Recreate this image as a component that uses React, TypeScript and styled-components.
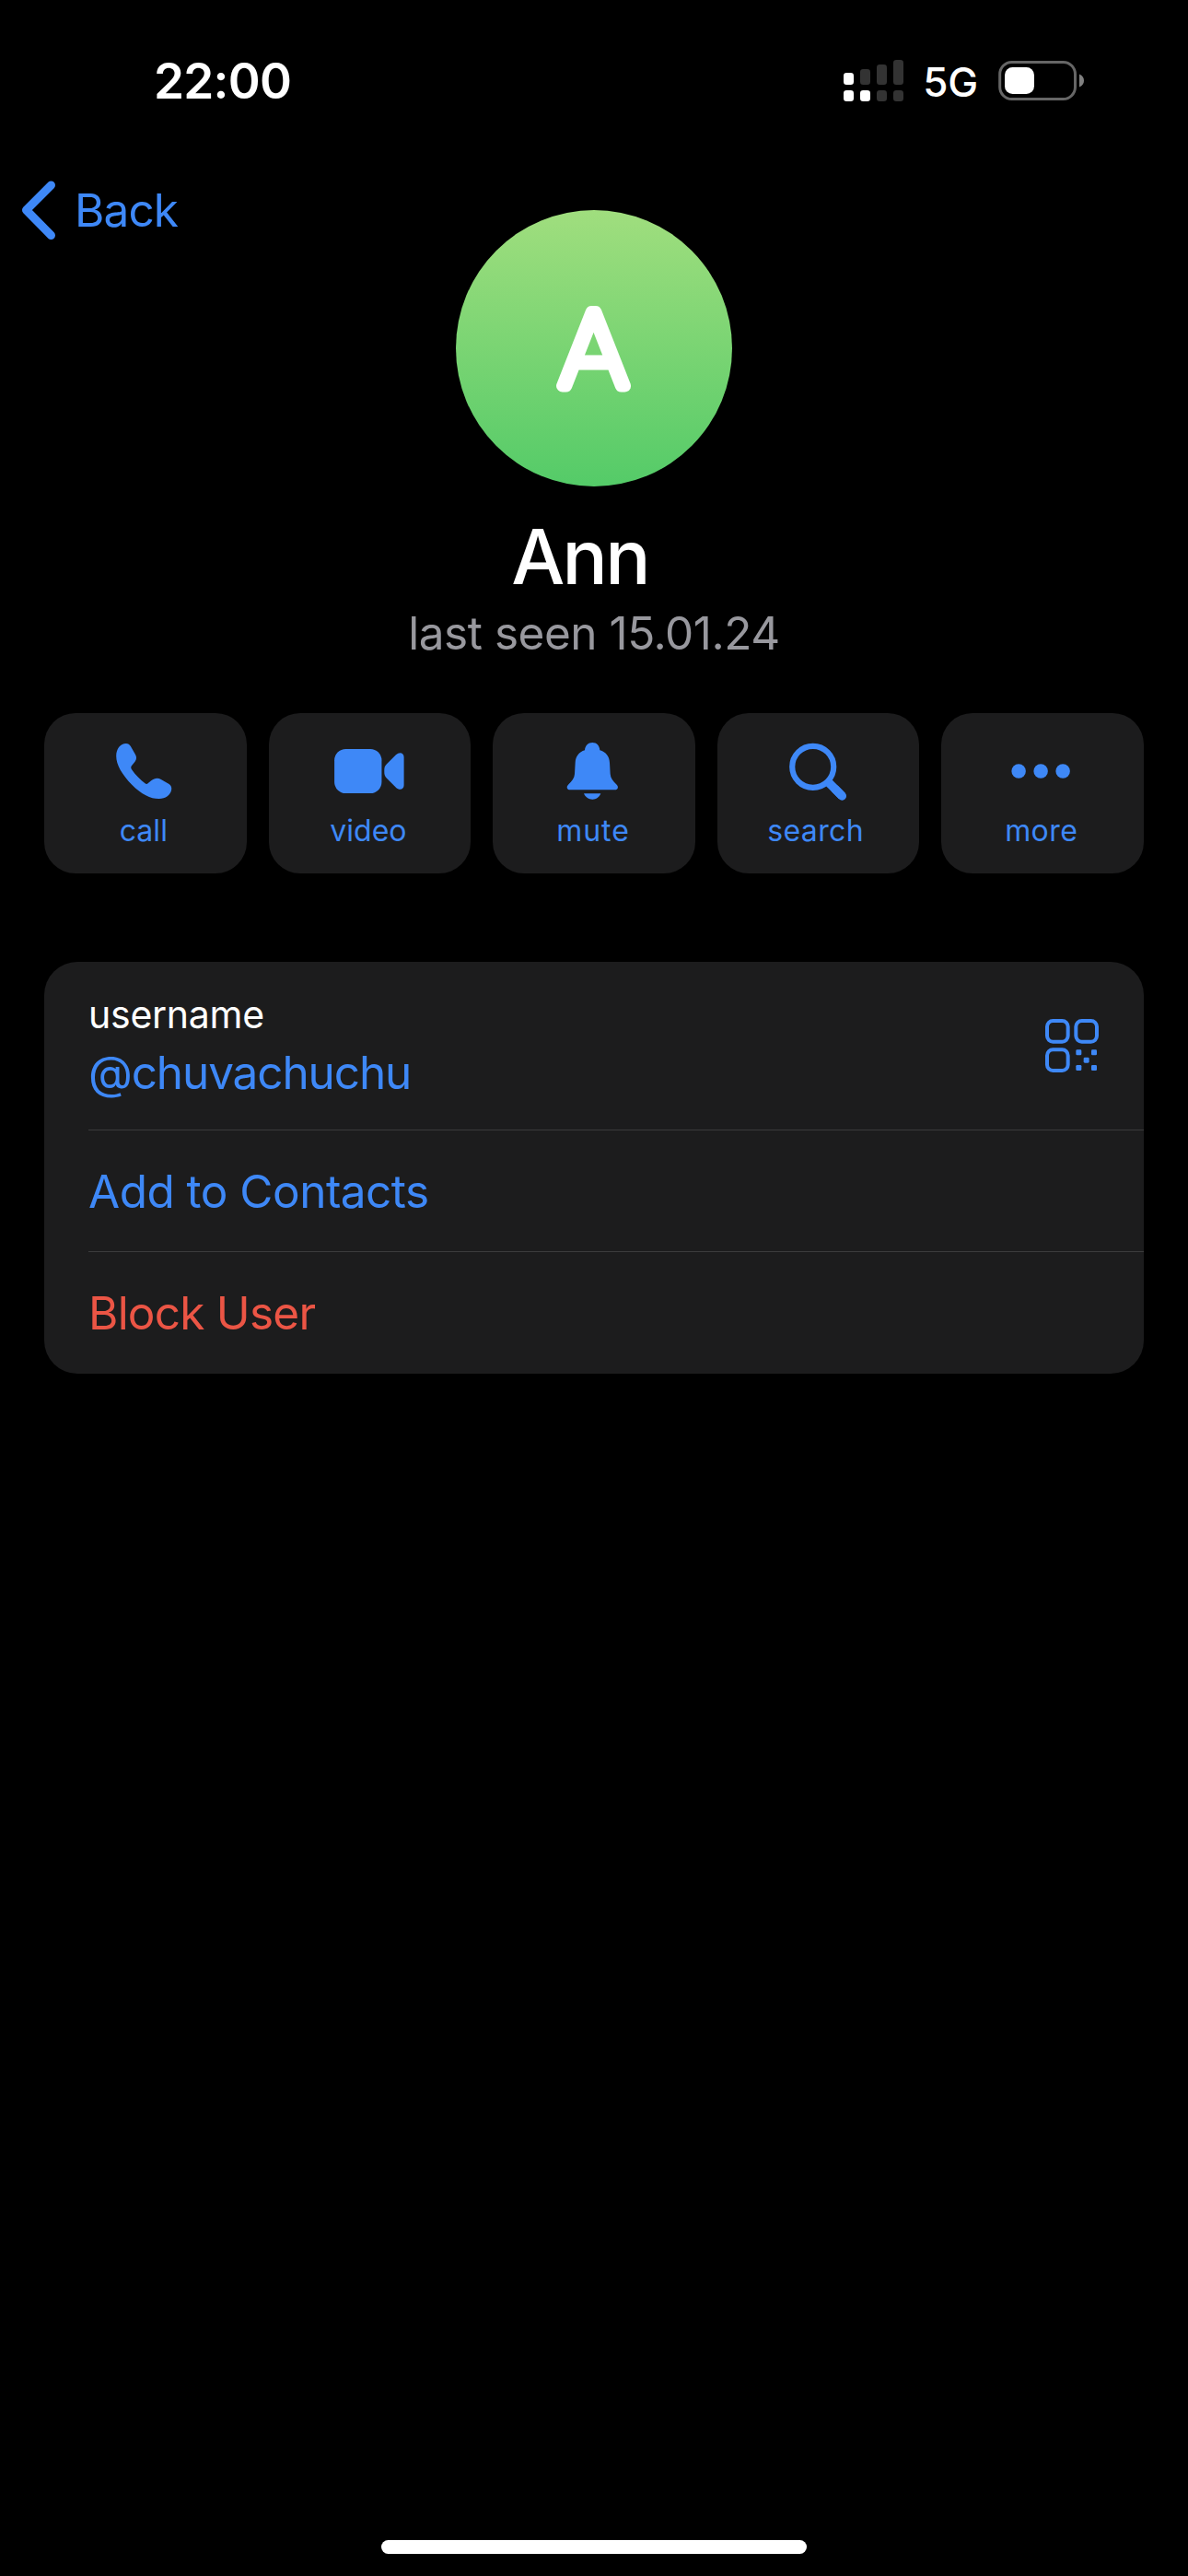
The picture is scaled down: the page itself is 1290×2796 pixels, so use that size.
import React from "react";
import styled, { createGlobalStyle } from "styled-components";

const BLUE = "#3e88f7";
const RED = "#eb5545";
const CARD = "#1c1c1d";

const Global = createGlobalStyle`
  body { margin: 0; background: #000; }
  * { box-sizing: border-box; }
`;

const Screen = styled.main`
  width: 1290px;
  height: 2796px;
  background: #000;
  color: #fff;
  font-family: Inter, "Noto Sans", sans-serif;
  display: flex;
  flex-direction: column;
  overflow: hidden;
`;

const StatusBar = styled.header`
  height: 176px;
  display: flex;
  align-items: center;
  justify-content: space-between;
  padding: 0 113px 0 167px;
`;

const Time = styled.span`
  font-size: 53px;
  font-weight: 600;
  line-height: 64px;
  letter-spacing: -0.73px;
`;

const Indicators = styled.div`
  display: flex;
  align-items: center;
  padding-bottom: 2px;
`;

const Network = styled.span`
  font-size: 44px;
  font-weight: 500;
  line-height: 54px;
  letter-spacing: -0.2px;
  margin: 3px 22px 0 21px;
`;

const Glyph = styled.svg`
  display: block;
  flex: none;
`;

const Top = styled.section`
  display: grid;

  > * {
    grid-area: 1 / 1;
  }
`;

const BackButton = styled.button`
  align-self: start;
  justify-self: start;
  height: 104px;
  display: flex;
  align-items: center;
  gap: 19px;
  padding: 0 0 0 22px;
  border: 0;
  background: none;
  color: ${BLUE};
  font: 400 49.5px/60px Inter, "Noto Sans", sans-serif;
  letter-spacing: -0.9px;
`;

const Profile = styled.div`
  display: flex;
  flex-direction: column;
  align-items: center;
  padding-top: 52px;
`;

const Avatar = styled.div`
  width: 300px;
  height: 300px;
  border-radius: 50%;
  overflow: hidden;
  background: linear-gradient(#a0de7e, #54cb68);
`;

const Name = styled.h1`
  margin: 27px 31px 0 0;
  font-size: 82px;
  font-weight: 500;
  line-height: 100px;
  letter-spacing: -2.73px;
`;

const LastSeen = styled.p`
  margin: 2px 0 0;
  color: #98989e;
  font-size: 49.5px;
  line-height: 60px;
  letter-spacing: -0.47px;
`;

const Actions = styled.nav`
  display: grid;
  grid-template-columns: repeat(5, 1fr);
  gap: 24px;
  margin: 57px 48px 0;
`;

const Action = styled.button`
  height: 174px;
  display: flex;
  flex-direction: column;
  align-items: center;
  gap: 9px;
  padding: 27px 0 0;
  border: 0;
  border-radius: 34px;
  background: ${CARD};
  color: ${BLUE};
`;

const ActionLabel = styled.span<{ $spacing: number; $trim: number }>`
  font: 400 32px/40px Inter, "Noto Sans", sans-serif;
  letter-spacing: ${(p) => p.$spacing}px;
  padding-right: ${(p) => p.$trim}px;
`;

const Card = styled.section`
  margin: 96px 48px 0;
  border-radius: 36px;
  background: ${CARD};
  padding-left: 48px;
`;

const Row = styled.div<{ $height: number; $last?: boolean }>`
  height: ${(p) => p.$height}px;
  display: flex;
  align-items: center;
  justify-content: space-between;
  padding-right: 48px;
  border-bottom: ${(p) => (p.$last ? "0" : "1px solid #3b3b3c")};
`;

const Field = styled.div`
  display: flex;
  flex-direction: column;
  gap: 8px;
`;

const FieldLabel = styled.span`
  font-size: 41px;
  line-height: 50px;
  letter-spacing: -0.25px;
`;

const RowText = styled.span<{ $color?: string; $spacing: number }>`
  color: ${(p) => p.$color ?? BLUE};
  font-size: 49.5px;
  line-height: 60px;
  letter-spacing: ${(p) => p.$spacing}px;
`;

const HomeIndicator = styled.div`
  width: 462px;
  height: 15px;
  border-radius: 8px;
  background: #fff;
  margin: auto auto 24px;
`;

const actions = [
  {
    label: "call",
    spacing: 0.06,
    trim: 4,
    viewBox: "233.4 123 240 216",
    icon: (
      <path d="M258 182C258 158 272 141 290 141C297 141 301 144 305 150L320 176C325 184 325 192 319 200L308 214C305 218 306 221 308 225C320 243 338 260 352 271C356 274 359 273 362 270L372 262C383 253 394 252 404 258L430 273C437 278 439 284 438 291C435 309 419 321 397 321C370 321 340 306 309 275C277 242 258 210 258 182Z" />
    ),
  },
  {
    label: "video",
    spacing: 0,
    trim: 3,
    viewBox: "964.2 123 240 216",
    icon: (
      <>
        <rect x="970.5" y="159" width="154" height="144" rx="37" />
        <path d="M1133 231C1133 220 1134 215 1141 208L1171 178C1182 167 1197 171 1197 185V277C1197 291 1182 295 1171 284L1141 254C1134 247 1133 242 1133 231Z" />
      </>
    ),
  },
  {
    label: "mute",
    spacing: 0.96,
    trim: 2,
    viewBox: "255 123 240 216",
    icon: (
      <>
        <path d="M370 138C384 138 393 148 394 163C414 169 425 183 426 203L428 240C429 254 436 263 449 275C456 282 453 292 443 292H297C287 292 284 282 291 275C304 263 311 254 312 240L314 203C315 183 326 169 345 163C346 148 356 138 370 138Z" />
        <path d="M342 304H397C392 316 382 323 370 323C358 323 347 316 342 304Z" />
      </>
    ),
  },
  {
    label: "search",
    spacing: 0.35,
    trim: 6,
    viewBox: "985.8 123 240 216",
    icon: (
      <g fill="none" stroke="currentColor">
        <circle cx="1087" cy="217" r="67.5" strokeWidth="18.5" />
        <path d="M1139 269L1182 312" strokeWidth="28" />
        <path d="M1160 290L1182 312" strokeWidth="28" strokeLinecap="round" />
      </g>
    ),
  },
  {
    label: "more",
    spacing: 0.42,
    trim: 3,
    viewBox: "336.6 123 240 216",
    icon: (
      <>
        <circle cx="379" cy="231" r="23.3" />
        <circle cx="451" cy="231" r="23.3" />
        <circle cx="523" cy="231" r="23.3" />
      </>
    ),
  },
];

function Signal() {
  const bars = [
    { x: 0, y: 14, h: 13, top: "#fff", bottom: "#fff" },
    { x: 18, y: 10, h: 17, top: "#333", bottom: "#fff" },
    { x: 36, y: 5, h: 22, top: "#333", bottom: "#333" },
    { x: 54, y: 0, h: 27, top: "#333", bottom: "#333" },
  ];
  return (
    <Glyph width="65" height="45" viewBox="0 0 65 45">
      {bars.map((b) => (
        <g key={b.x}>
          <rect x={b.x} y={b.y} width="11" height={b.h} rx="3.3" fill={b.top} />
          <rect x={b.x} y="33" width="11" height="12" rx="3.3" fill={b.bottom} />
        </g>
      ))}
    </Glyph>
  );
}

function Battery() {
  return (
    <Glyph width="93" height="43" viewBox="0 0 93 43">
      <rect x="1.7" y="1.5" width="81.8" height="40" rx="13" fill="none" stroke="#666" strokeWidth="3" />
      <rect x="7" y="7" width="32" height="29" rx="8.5" fill="#fff" />
      <path d="M88 14.5C91.5 16 93 18.5 93 21.5C93 24.5 91.5 27 88 28.5Z" fill="#808080" />
    </Glyph>
  );
}

function QrIcon() {
  return (
    <Glyph width="60" height="60" viewBox="102 225 180 180" fill={BLUE}>
      <g fill="none" stroke={BLUE} strokeWidth="12">
        <rect x="111" y="234" width="68" height="68" rx="19" />
        <rect x="205" y="234" width="68" height="68" rx="19" />
        <rect x="111" y="328" width="68" height="68" rx="19" />
      </g>
      <rect x="205" y="328" width="18" height="18" rx="4" />
      <rect x="255" y="328" width="18" height="18" rx="4" />
      <rect x="230" y="353" width="18" height="18" rx="4" />
      <rect x="205" y="378" width="18" height="18" rx="4" />
      <rect x="255" y="378" width="18" height="18" rx="4" />
    </Glyph>
  );
}

function Initial({ letter }: { letter: string }) {
  return (
    <Glyph width="300" height="300" viewBox="0 0 300 300">
      <text
        transform="translate(149.5 190.5) scale(1.06 1)"
        textAnchor="middle"
        fontFamily="Roboto, sans-serif"
        fontWeight="100"
        fontSize="112.5"
        fill="#fff"
        stroke="#fff"
        strokeWidth="13"
        strokeLinejoin="round"
      >
        {letter}
      </text>
    </Glyph>
  );
}

export default function App() {
  return (
    <Screen>
      <Global />
      <StatusBar>
        <Time>22:00</Time>
        <Indicators>
          <Signal />
          <Network>5G</Network>
          <Battery />
        </Indicators>
      </StatusBar>
      <Top>
        <BackButton>
          <Glyph width="40" height="68" viewBox="0 0 40 68" fill="none" stroke={BLUE} strokeWidth="9" strokeLinecap="round" strokeLinejoin="round">
            <path d="M33.5 7L6.5 34L33.5 61.5" />
          </Glyph>
          Back
        </BackButton>
        <Profile>
          <Avatar>
            <Initial letter="A" />
          </Avatar>
          <Name>Ann</Name>
          <LastSeen>last seen 15.01.24</LastSeen>
        </Profile>
      </Top>
      <Actions>
        {actions.map((a) => (
          <Action key={a.label}>
            <Glyph width="80" height="72" viewBox={a.viewBox} fill="currentColor">
              {a.icon}
            </Glyph>
            <ActionLabel $spacing={a.spacing} $trim={a.trim}>
              {a.label}
            </ActionLabel>
          </Action>
        ))}
      </Actions>
      <Card>
        <Row $height={183}>
          <Field>
            <FieldLabel>username</FieldLabel>
            <RowText $spacing={-1.12}>@chuvachuchu</RowText>
          </Field>
          <QrIcon />
        </Row>
        <Row $height={132}>
          <RowText $spacing={-0.52}>Add to Contacts</RowText>
        </Row>
        <Row $height={132} $last>
          <RowText $spacing={-0.76} $color={RED}>
            Block User
          </RowText>
        </Row>
      </Card>
      <HomeIndicator />
    </Screen>
  );
}
